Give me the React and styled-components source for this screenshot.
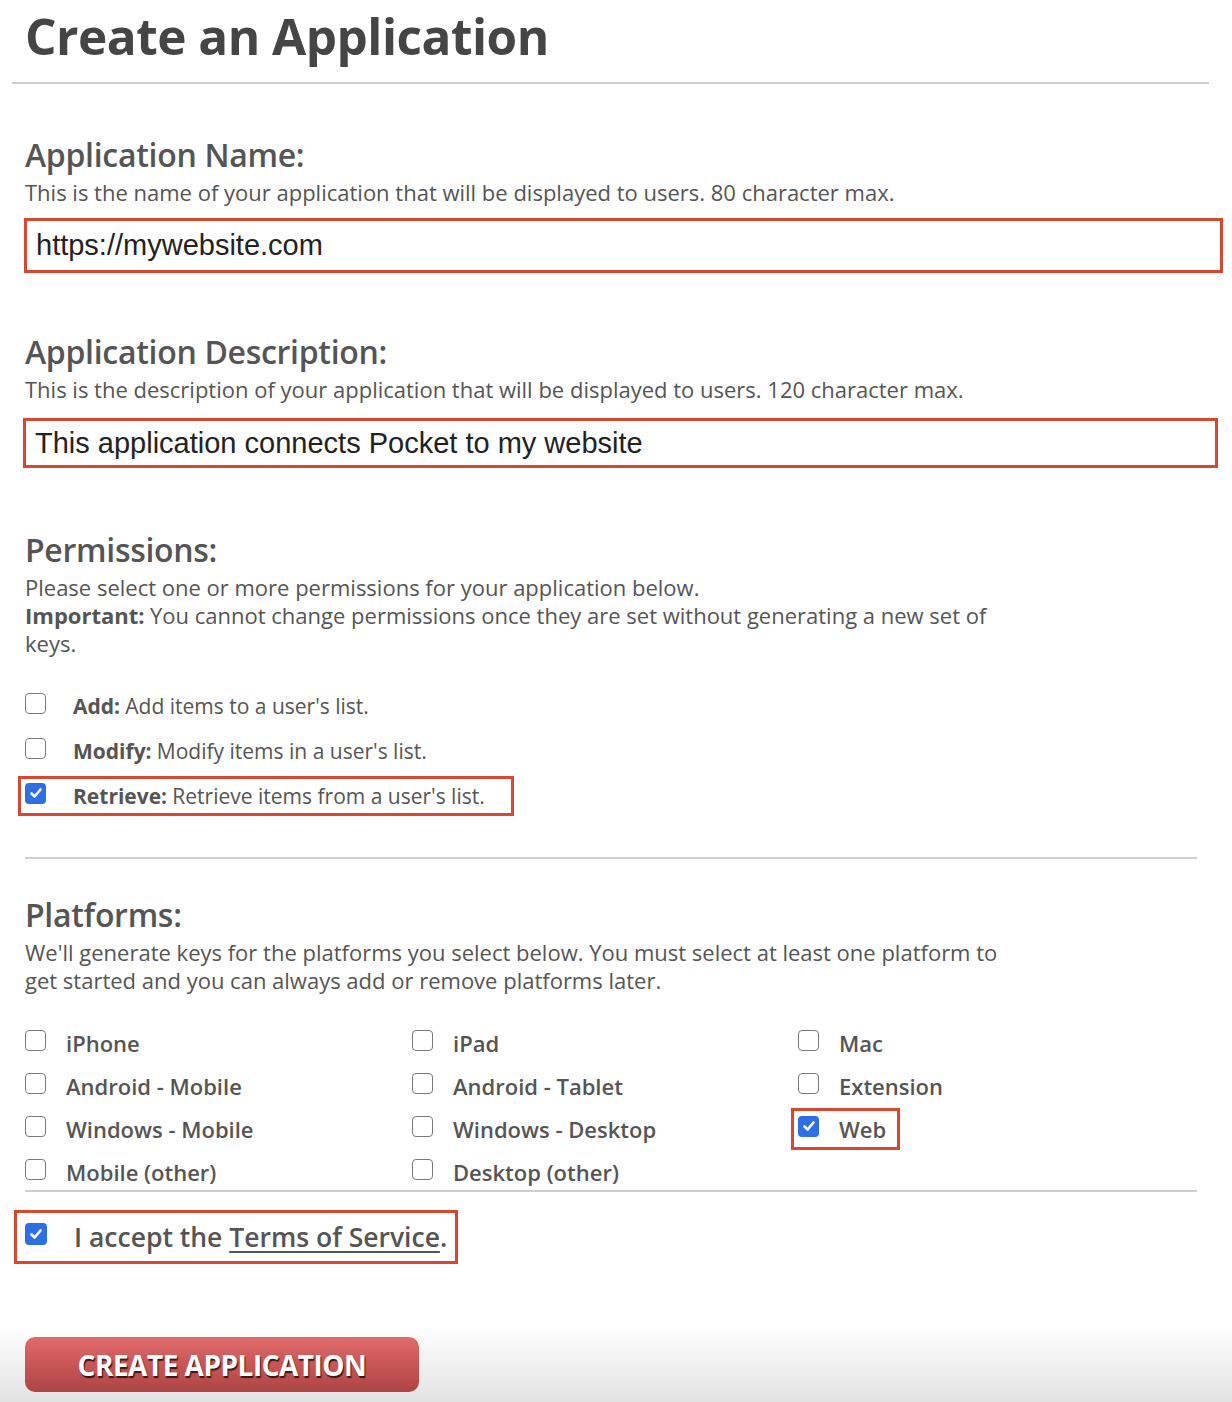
import React from "react";
import styled, { createGlobalStyle } from "styled-components";

const Global = createGlobalStyle`
  html, body { margin: 0; padding: 0; background: #fff; }
  body { font-family: "Open Sans", "Lato", sans-serif; color: #555; }
  * { box-sizing: border-box; }
`;

const Page = styled.div`
  min-height: 1402px;
  padding: 0 35px 0 25px;
  background: linear-gradient(to bottom, #fff 0, #fff 1325px, #e2e2e2 1402px);
`;

const Title = styled.h1`
  margin: 0;
  padding-top: 6px;
  font-size: 49.5px;
  line-height: 60px;
  font-weight: 700;
  color: #454545;
  letter-spacing: -0.5px;
`;

const Divider = styled.hr`
  border: 0;
  height: 2px;
  background: #cfcfcf;
  margin: ${(p) => p.$m || "0"};
`;

const Section = styled.section`
  margin-top: ${(p) => p.$top || 0}px;
`;

const Heading = styled.h2`
  margin: 0;
  font-size: 32px;
  line-height: 46px;
  font-weight: 600;
  color: #555;
  letter-spacing: -0.3px;
`;

const Help = styled.p`
  margin: 0;
  font-size: 22px;
  line-height: 28px;
  color: #555;
  max-width: ${(p) => p.$max || 1200}px;
`;

const Strong = styled.strong`
  font-weight: 700;
  margin-right: 0.25em;
`;

const TextInput = styled.input`
  display: block;
  width: ${(p) => p.$w}px;
  height: ${(p) => p.$h}px;
  margin: ${(p) => p.$m || "0"};
  border: 3px solid #d9472f;
  padding: 0 9px;
  font-family: "Liberation Sans", Arial, sans-serif;
  font-size: 29px;
  color: #222;
  background: #fff;
  outline: none;
`;

const CheckList = styled.div`
  display: flex;
  flex-direction: column;
  gap: 17px;
  margin-top: 35px;
`;

const Row = styled.label`
  display: flex;
  align-items: center;
  gap: ${(p) => p.$gap}px;
  width: fit-content;
  font-size: ${(p) => p.$size}px;
  line-height: ${(p) => p.$lh || 28}px;
  color: #555;
  font-weight: ${(p) => p.$weight || 400};
  padding: ${(p) => p.$pad || "0"};
  margin-left: ${(p) => p.$ml || 0}px;
  outline: ${(p) => (p.$hl ? "3px solid #d9472f" : "none")};
  outline-offset: ${(p) => p.$off || 3}px;
`;

const Box = styled.span`
  flex: none;
  width: ${(p) => p.$s || 21}px;
  height: ${(p) => p.$s || 21}px;
  border-radius: 4px;
  border: ${(p) => (p.$on ? "none" : "1.5px solid #7a7a7a")};
  background: ${(p) => (p.$on ? "#2f6fe6" : "#fff")};
  display: flex;
  align-items: center;
  justify-content: center;
  margin-top: -6px;
`;

const Grid = styled.div`
  display: grid;
  grid-template-columns: 387px 386px 1fr;
  row-gap: 15px;
  margin-top: 35px;
`;

const TermsLink = styled.a`
  color: #555;
  text-decoration: underline;
  text-underline-offset: 4px;
  text-decoration-thickness: 2px;
`;

const Button = styled.button`
  display: block;
  margin-top: 84px;
  width: 394px;
  height: 55px;
  border: 0;
  border-radius: 10px;
  background: linear-gradient(to bottom, #e06b6b 0%, #c85656 50%, #ad4545 100%);
  color: #fff;
  font-family: "Open Sans", sans-serif;
  font-weight: 700;
  font-size: 28px;
  letter-spacing: -0.5px;
  text-shadow: 1px 2px 1px #3a1515;
  padding: 0;
`;

const Check = ({ on, size }) => (
  <Box $on={on} $s={size}>
    {on && (
      <svg width="14" height="14" viewBox="0 0 14 14">
        <path d="M2.5 7.5 L5.6 10.5 L11.5 3.5" fill="none" stroke="#fff" strokeWidth="2.6" strokeLinecap="round" strokeLinejoin="round" />
      </svg>
    )}
  </Box>
);

const perms = [
  ["Add:", "Add items to a user's list.", false],
  ["Modify:", "Modify items in a user's list.", false],
  ["Retrieve:", "Retrieve items from a user's list.", true],
];

const platforms = [
  ["iPhone", false], ["iPad", false], ["Mac", false],
  ["Android - Mobile", false], ["Android - Tablet", false], ["Extension", false],
  ["Windows - Mobile", false], ["Windows - Desktop", false], ["Web", true],
  ["Mobile (other)", false], ["Desktop (other)", false], null,
];

export default function App() {
  return (
    <Page>
      <Global />
      <Title>Create an Application</Title>
      <Divider $m="16px -12px 0 -13px" />

      <Section $top={48}>
        <Heading>Application Name:</Heading>
        <Help>This is the name of your application that will be displayed to users. 80 character max.</Help>
        <TextInput $w={1199} $h={55} $m="12px 0 0 -1px" defaultValue="https://mywebsite.com" />
      </Section>

      <Section $top={56}>
        <Heading>Application Description:</Heading>
        <Help>This is the description of your application that will be displayed to users. 120 character max.</Help>
        <TextInput $w={1195} $h={50} $m="15px 0 0 -2px" defaultValue="This application connects Pocket to my website" />
      </Section>

      <Section $top={59}>
        <Heading>Permissions:</Heading>
        <Help $max={990}>
          Please select one or more permissions for your application below.
          <br />
          <Strong>Important:</Strong>You cannot change permissions once they are set without generating a new set of keys.
        </Help>
        <CheckList>
          {perms.map(([k, v, on]) => (
            <Row key={k} $hl={on} $size={21} $gap={27} $pad="0 23px 0 1px" $ml={-1}>
              <Check on={on} />
              <span><Strong>{k}</Strong>{v}</span>
            </Row>
          ))}
        </CheckList>
      </Section>

      <Divider $m="47px 0 0 0" />

      <Section $top={33}>
        <Heading>Platforms:</Heading>
        <Help $max={990}>
          We'll generate keys for the platforms you select below. You must select at least one platform to get started and you can always add or remove platforms later.
        </Help>
        <Grid>
          {platforms.map((p, i) =>
            p ? (
              <Row key={i} $hl={p[1]} $size={22} $gap={20} $weight={600} $pad="0 7px 0 0" $off={4}>
                <Check on={p[1]} />
                <span>{p[0]}</span>
              </Row>
            ) : (
              <span key={i} />
            )
          )}
        </Grid>
      </Section>

      <Divider $m="4px 0 0 0" />

      <Section $top={29}>
        <Row $hl $size={26.5} $lh={32} $gap={27} $weight={600} $off={8}>
          <Check on size={22} />
          <span>I accept the <TermsLink href="#">Terms of Service</TermsLink>.</span>
        </Row>
      </Section>

      <Button>CREATE APPLICATION</Button>
    </Page>
  );
}
